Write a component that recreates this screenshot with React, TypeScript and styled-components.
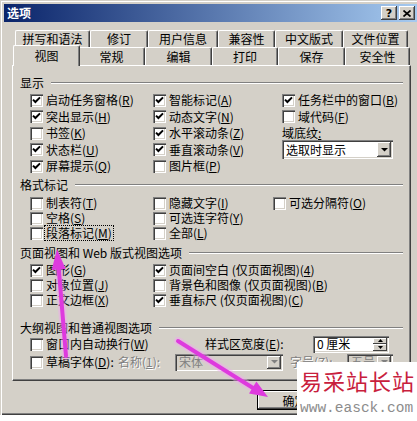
import React from 'react';
import styled, { createGlobalStyle, css } from 'styled-components';

const FACE = '#d4d0c8';
const SHADOW = '#808080';
const DARK = '#404040';
const FONT = '"Noto Sans CJK SC", "Noto Sans", sans-serif';

const GlobalStyle = createGlobalStyle`
  html, body {
    margin: 0;
    padding: 0;
    background: #fff;
    overflow: hidden;
  }
  body {
    font-family: ${FONT};
    font-size: 12px;
    color: #000;
  }
`;

// "启动任务窗格(&R)" -> underline the letter after &
function Label({ text }: { text: string }) {
  const i = text.indexOf('&');
  if (i < 0) return <>{text}</>;
  return (
    <>
      {text.slice(0, i)}
      <u>{text[i + 1]}</u>
      {text.slice(i + 2)}
    </>
  );
}

function Check({ label, checked, focus }: { label: string; checked?: boolean; focus?: boolean }) {
  return (
    <Option>
      <Box>
        {checked && (
          <svg width="13" height="13" viewBox="0 0 13 13">
            <path d="M3 5.6 L5.4 8 L10 3.4" stroke="#000" strokeWidth="2" fill="none" />
          </svg>
        )}
      </Box>
      <Caption $focus={focus}>
        <Label text={label} />
      </Caption>
    </Option>
  );
}

function DropArrow({ disabled }: { disabled?: boolean }) {
  return (
    <svg width="7" height="4" viewBox="0 0 7 4">
      <polygon points="0,0 7,0 3.5,3.5" fill={disabled ? SHADOW : '#000'} />
    </svg>
  );
}

const backTabs: [string, number][] = [
  ['拼写和语法', 75],
  ['修订', 58],
  ['用户信息', 70],
  ['兼容性', 57],
  ['中文版式', 68],
  ['文件位置', 65],
];

const frontTabs: [string, number][] = [
  ['视图', 63],
  ['常规', 67],
  ['编辑', 67],
  ['打印', 66],
  ['保存', 67],
  ['安全性', 65],
];

export default function App() {
  return (
    <>
      <GlobalStyle />
      <Page>
        <Window>
          <TitleBar>
            <Title>选项</Title>
            <CaptionButtons>
              <CaptionButton>?</CaptionButton>
              <CaptionButton>
                <svg width="8" height="7" viewBox="0 0 8 7">
                  <path d="M0.5 0.5 L7.5 6.5 M7.5 0.5 L0.5 6.5" stroke="#000" strokeWidth="1.7" />
                </svg>
              </CaptionButton>
            </CaptionButtons>
          </TitleBar>
          <Body>
            <TabRow>
              {backTabs.map(([t, w]) => (
                <Tab key={t} $w={w}>
                  {t}
                </Tab>
              ))}
            </TabRow>
            <TabRow $front>
              {frontTabs.map(([t, w], i) => (
                <Tab key={t} $w={w} $active={i === 0}>
                  {t}
                </Tab>
              ))}
            </TabRow>
            <Panel>
              <Heading $mt={0}>显示</Heading>
              <OptionGrid $cols="123px 129px 1fr" $rows={5} $row={16.5} $mt={2}>
                <Check label="启动任务窗格(&R)" checked />
                <Check label="突出显示(&H)" checked />
                <Check label="书签(&K)" />
                <Check label="状态栏(&U)" checked />
                <Check label="屏幕提示(&Q)" checked />
                <Check label="智能标记(&A)" checked />
                <Check label="动态文字(&N)" checked />
                <Check label="水平滚动条(&Z)" checked />
                <Check label="垂直滚动条(&V)" checked />
                <Check label="图片框(&P)" />
                <Check label="任务栏中的窗口(&B)" checked />
                <Check label="域代码(&F)" />
                <FieldLabel>
                  域底纹<u>:</u>
                </FieldLabel>
                <Combo $w={111} $h={19}>
                  <ComboText>选取时显示</ComboText>
                  <DropButton>
                    <DropArrow />
                  </DropButton>
                </Combo>
                <span />
              </OptionGrid>

              <Heading $mt={3.5}>格式标记</Heading>
              <OptionGrid $cols="123px 120px 1fr" $rows={3} $row={15} $mt={3.5}>
                <Check label="制表符(&T)" />
                <Check label="空格(&S)" />
                <Check label="段落标记(&M)" focus />
                <Check label="隐藏文字(&I)" />
                <Check label="可选连字符(&Y)" />
                <Check label="全部(&L)" />
                <Check label="可选分隔符(&O)" />
              </OptionGrid>

              <Heading $mt={5.5}>页面视图和 Web 版式视图选项</Heading>
              <OptionGrid $cols="123px 1fr" $rows={3} $row={15} $mt={2.5}>
                <Check label="图形(&G)" checked />
                <Check label="对象位置(&J)" />
                <Check label="正文边框(&X)" />
                <Check label="页面间空白 (仅页面视图)(&4)" checked />
                <Check label="背景色和图像 (仅页面视图)(&B)" />
                <Check label="垂直标尺 (仅页面视图)(&C)" checked />
              </OptionGrid>

              <Heading $mt={13.5}>大纲视图和普通视图选项</Heading>
              <OutlineRow>
                <Slot $w={175}>
                  <Check label="窗口内自动换行(&W)" />
                </Slot>
                <Slot $w={108}>
                  <Label text="样式区宽度(&E):" />
                </Slot>
                <Spin>
                  <ComboText>0 厘米</ComboText>
                  <SpinButtons>
                    <SpinButton>
                      <svg width="5" height="3" viewBox="0 0 5 3">
                        <polygon points="2.5,0 5,3 0,3" fill="#000" />
                      </svg>
                    </SpinButton>
                    <SpinButton>
                      <svg width="5" height="3" viewBox="0 0 5 3">
                        <polygon points="0,0 5,0 2.5,3" fill="#000" />
                      </svg>
                    </SpinButton>
                  </SpinButtons>
                </Spin>
              </OutlineRow>
              <OutlineRow>
                <Slot $w={88}>
                  <Check label="草稿字体(&D):" />
                </Slot>
                <Slot $w={57} $disabled>
                  <Label text="名称(&1):" />
                </Slot>
                <Combo $w={108} $h={17} $disabled>
                  <ComboText $disabled>宋体</ComboText>
                  <DropButton>
                    <DropArrow disabled />
                  </DropButton>
                </Combo>
                <Slot $w={57} $disabled $ml={7}>
                  <Label text="字号(&Z):" />
                </Slot>
                <Combo $w={46} $h={17} $disabled>
                  <ComboText $disabled>五号</ComboText>
                  <DropButton>
                    <DropArrow disabled />
                  </DropButton>
                </Combo>
              </OutlineRow>
            </Panel>
            <ButtonRow>
              <PushButton $default>确定</PushButton>
              <PushButton>取消</PushButton>
            </ButtonRow>
          </Body>
        </Window>

        <ArrowLayer width="417" height="421" viewBox="0 0 417 421">
          <g stroke="#f3a6f3" strokeWidth="8" strokeLinecap="round" opacity="0.45">
            <path d="M66 356 L58.7 268" />
            <path d="M178 341 L253 388" />
          </g>
          <g stroke="#de3ade" strokeWidth="4" strokeLinecap="round">
            <path d="M66 356 L58.7 268" />
            <path d="M178 341 L253 388" />
          </g>
          <g fill="#de3ade">
            <polygon points="57,249 65.7,269 51.7,270" />
            <polygon points="268,397 249,393.4 256.4,381.6" />
          </g>
        </ArrowLayer>

        <Watermark>
          <MarkTitle>易采站长站</MarkTitle>
          <MarkUrl>www.easck.com</MarkUrl>
        </Watermark>
      </Page>
    </>
  );
}

const Page = styled.div`
  position: relative;
  width: 417px;
  height: 421px;
  overflow: hidden;
  background: #fff;
`;

const Window = styled.div`
  width: 421px;
  height: 415px;
  box-sizing: border-box;
  padding: 4px;
  background: ${FACE};
  box-shadow: inset 1px 1px ${FACE}, inset 2px 2px #fff, inset -1px -1px ${DARK},
    inset -2px -2px ${SHADOW};
  display: flex;
  flex-direction: column;
`;

const TitleBar = styled.div`
  height: 18px;
  display: flex;
  align-items: center;
  padding: 0 2px 0 3px;
  background: linear-gradient(to right, #0a246a, #a6caf0);
`;

const Title = styled.span`
  color: #fff;
  font-weight: bold;
  font-size: 12px;
  line-height: 18px;
`;

const CaptionButtons = styled.div`
  margin-left: auto;
  display: flex;
  gap: 2px;
`;

const CaptionButton = styled.span`
  width: 16px;
  height: 14px;
  box-sizing: border-box;
  background: ${FACE};
  box-shadow: inset -1px -1px ${DARK}, inset 1px 1px #fff, inset -2px -2px ${SHADOW};
  display: flex;
  align-items: center;
  justify-content: center;
  font: bold 11px 'DejaVu Sans', sans-serif;
  line-height: 1;
`;

const Body = styled.div`
  flex: 1;
  display: flex;
  flex-direction: column;
  padding: 8px 6px 0 8px;
`;

const TabRow = styled.div<{ $front?: boolean }>`
  display: flex;
  height: ${p => (p.$front ? 18 : 17)}px;
  padding-left: 3px;
  position: relative;
  z-index: ${p => (p.$front ? 2 : 1)};
`;

const Tab = styled.div<{ $w: number; $active?: boolean }>`
  flex: none;
  width: ${p => p.$w}px;
  box-sizing: border-box;
  display: flex;
  align-items: center;
  justify-content: center;
  background: ${FACE};
  border-top: 1px solid #fff;
  border-left: 1px solid #fff;
  border-right: 1px solid ${DARK};
  box-shadow: inset -1px 0 ${SHADOW};
  border-radius: 2px 2px 0 0;
  line-height: 1;

  ${p =>
    p.$active &&
    css`
      width: ${p.$w + 4}px;
      height: 21px;
      margin: -2px -2px 0 -2px;
      position: relative;
      z-index: 3;
    `}
`;

const Panel = styled.div`
  height: 316px;
  box-sizing: border-box;
  background: ${FACE};
  border-top: 1px solid #fff;
  border-left: 1px solid #fff;
  border-right: 1px solid ${DARK};
  border-bottom: 1px solid ${DARK};
  box-shadow: inset -1px -1px ${SHADOW};
  padding-top: 10px;
`;

const Heading = styled.div<{ $mt: number }>`
  display: flex;
  align-items: center;
  height: 14px;
  line-height: 14px;
  margin-top: ${p => p.$mt}px;
  padding: 0 7px;
  white-space: nowrap;

  &::after {
    content: '';
    flex: 1;
    margin-left: 7px;
    border-top: 1px solid ${SHADOW};
    border-bottom: 1px solid #fff;
  }
`;

const OptionGrid = styled.div<{ $cols: string; $rows: number; $row: number; $mt: number }>`
  display: grid;
  grid-template-columns: ${p => p.$cols};
  grid-template-rows: repeat(${p => p.$rows}, ${p => p.$row}px);
  grid-auto-flow: column;
  align-items: center;
  margin-top: ${p => p.$mt}px;
  padding-left: 17px;
`;

const Option = styled.label`
  display: flex;
  align-items: center;
  gap: 2px;
  white-space: nowrap;
  line-height: 14px;
`;

const Box = styled.span`
  flex: none;
  width: 13px;
  height: 13px;
  box-sizing: border-box;
  background: #fff;
  box-shadow: inset 1px 1px ${SHADOW}, inset 2px 2px ${DARK}, inset -1px -1px #fff,
    inset -2px -2px ${FACE};
  display: flex;
`;

const Caption = styled.span<{ $focus?: boolean }>`
  padding: 0 1px;
  ${p =>
    p.$focus &&
    css`
      outline: 1px dotted #000;
    `}
`;

const FieldLabel = styled.span`
  line-height: 14px;
`;

const Combo = styled.div<{ $w: number; $h: number; $disabled?: boolean }>`
  width: ${p => p.$w}px;
  height: ${p => p.$h}px;
  box-sizing: border-box;
  padding: 2px;
  display: flex;
  align-items: center;
  background: ${p => (p.$disabled ? FACE : '#fff')};
  box-shadow: inset 1px 1px ${SHADOW}, inset 2px 2px ${DARK}, inset -1px -1px #fff,
    inset -2px -2px ${FACE};
`;

const ComboText = styled.span<{ $disabled?: boolean }>`
  flex: 1;
  padding-left: 2px;
  line-height: 14px;
  white-space: nowrap;
  color: ${p => (p.$disabled ? SHADOW : '#000')};
`;

const DropButton = styled.span`
  flex: none;
  width: 14px;
  align-self: stretch;
  background: ${FACE};
  box-shadow: inset -1px -1px ${DARK}, inset 1px 1px #fff, inset -2px -2px ${SHADOW};
  display: flex;
  align-items: center;
  justify-content: center;
`;

const OutlineRow = styled.div`
  display: flex;
  align-items: center;
  height: 18px;
  padding-left: 17px;
  white-space: nowrap;
`;

const Slot = styled.div<{ $w: number; $disabled?: boolean; $ml?: number }>`
  flex: none;
  width: ${p => p.$w}px;
  margin-left: ${p => p.$ml ?? 0}px;
  line-height: 14px;
  color: ${p => (p.$disabled ? SHADOW : '#000')};
  text-shadow: ${p => (p.$disabled ? '1px 1px #fff' : 'none')};
`;

const Spin = styled.div`
  width: 76px;
  height: 17px;
  box-sizing: border-box;
  padding: 2px;
  display: flex;
  align-items: center;
  background: #fff;
  box-shadow: inset 1px 1px ${SHADOW}, inset 2px 2px ${DARK}, inset -1px -1px #fff,
    inset -2px -2px ${FACE};
`;

const SpinButtons = styled.div`
  flex: none;
  width: 14px;
  align-self: stretch;
  display: flex;
  flex-direction: column;
`;

const SpinButton = styled.span`
  flex: 1;
  background: ${FACE};
  box-shadow: inset -1px -1px ${DARK}, inset 1px 1px #fff;
  display: flex;
  align-items: center;
  justify-content: center;
`;

const ButtonRow = styled.div`
  display: flex;
  justify-content: flex-end;
  gap: 4px;
  margin-top: 9px;
`;

const PushButton = styled.div<{ $default?: boolean }>`
  width: 75px;
  height: 20px;
  box-sizing: border-box;
  display: flex;
  align-items: center;
  justify-content: center;
  background: ${FACE};
  box-shadow: inset -1px -1px ${DARK}, inset 1px 1px #fff, inset -2px -2px ${SHADOW};
  ${p =>
    p.$default &&
    css`
      border: 1px solid #000;
    `}
`;

const ArrowLayer = styled.svg`
  position: absolute;
  left: 0;
  top: 0;
  pointer-events: none;
`;

const Watermark = styled.div`
  position: absolute;
  right: 0;
  bottom: 0;
  width: 120px;
  height: 59px;
  box-sizing: border-box;
  padding: 5px 0 0 3px;
  background: #fff;
  display: flex;
  flex-direction: column;
`;

const MarkTitle = styled.div`
  color: #c8203c;
  font-size: 22px;
  line-height: 26px;
  letter-spacing: 1px;
  white-space: nowrap;
`;

const MarkUrl = styled.div`
  margin-top: 7px;
  color: #8c8c8c;
  font: 14.5px 'Liberation Mono', monospace;
  line-height: 16px;
  white-space: nowrap;
`;
